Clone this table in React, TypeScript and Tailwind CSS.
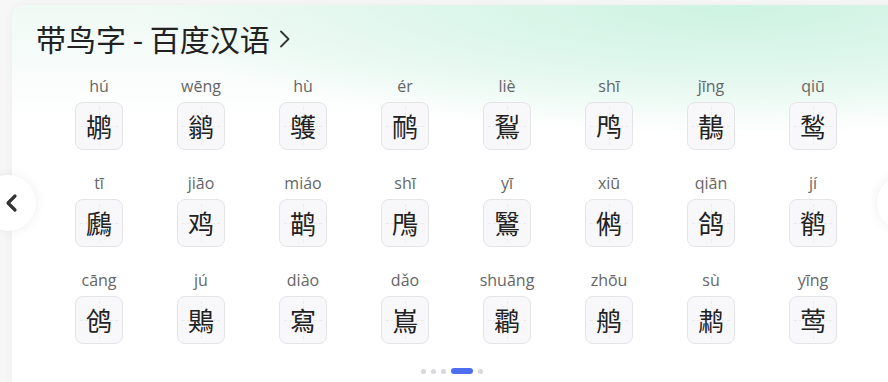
import React from "react";

type Glyph = { py: string; ch: string };

const rows: Glyph[][] = [
  [
    { py: "hú", ch: "鹕" },
    { py: "wēng", ch: "鹟" },
    { py: "hù", ch: "鹱" },
    { py: "ér", ch: "鸸" },
    { py: "liè", ch: "鴷" },
    { py: "shī", ch: "鸤" },
    { py: "jīng", ch: "鶄" },
    { py: "qiū", ch: "鹙" },
  ],
  [
    { py: "tī", ch: "鷉" },
    { py: "jiāo", ch: "鸡" },
    { py: "miáo", ch: "鹋" },
    { py: "shī", ch: "鳲" },
    { py: "yī", ch: "鷖" },
    { py: "xiū", ch: "鸺" },
    { py: "qiān", ch: "鸽" },
    { py: "jí", ch: "鹡" },
  ],
  [
    { py: "cāng", ch: "鸧" },
    { py: "jú", ch: "鶪" },
    { py: "diào", ch: "寫" },
    { py: "dǎo", ch: "嶌" },
    { py: "shuāng", ch: "鹴" },
    { py: "zhōu", ch: "鸼" },
    { py: "sù", ch: "鹔" },
    { py: "yīng", ch: "莺" },
  ],
];

function CharCell({ g }: { g: Glyph }) {
  return (
    <div className="flex flex-col items-center">
      <div className="h-5 text-[16px] leading-5 text-[#666] font-['Open_Sans',sans-serif]">{g.py}</div>
      <div className="relative mt-[6px] flex h-12 w-12 items-center justify-center rounded-lg border border-[#e4e4e6] bg-[#f8f8fa]">
        <div className="absolute left-1/2 top-1 bottom-1 border-l border-dashed border-[#ebebee]" />
        <div className="absolute top-1/2 left-1 right-1 border-t border-dashed border-[#ebebee]" />
        <span className="relative text-[26px] leading-none text-[#222] font-['Noto_Sans_CJK_SC',sans-serif]">{g.ch}</span>
      </div>
    </div>
  );
}

export default function App() {
  return (
    <div className="relative h-[382px] w-[888px] overflow-hidden bg-[#f7f7f7] pl-3 pt-[5px]">
      <div className="h-[400px] w-[900px] rounded-tl-xl bg-[radial-gradient(600px_130px_at_720px_0px,#cdf3e2_0%,rgba(214,245,231,0.7)_50%,rgba(255,255,255,0)_100%),linear-gradient(180deg,#f0faf5_0%,#f7fcfa_60px,#ffffff_115px)] shadow-[0_0_10px_rgba(0,0,0,0.05)]">
        <div className="flex items-center pl-6 pt-[15px] font-['Noto_Sans_CJK_SC',sans-serif] text-[30px] leading-9 text-[#222]">
          <span>带鸟字 - 百度汉语</span>
          <svg className="ml-[8px] mt-[1px]" width="12" height="20" viewBox="0 0 12 20" fill="none">
            <path d="M3 2.5l7.5 7.5-7.5 7.5" stroke="#333" strokeWidth="1.8" strokeLinecap="round" strokeLinejoin="round" />
          </svg>
        </div>

        <div className="ml-[36px] mt-5 grid w-[816px] grid-cols-8 gap-y-[23px]">
          {rows.flat().map((g, i) => (
            <CharCell key={i} g={g} />
          ))}
        </div>

        <div className="ml-[409px] mt-[24px] flex items-center gap-[5px]">
          <span className="h-[5px] w-[5px] rounded-full bg-[#d8d8dc]" />
          <span className="h-[5px] w-[5px] rounded-full bg-[#d8d8dc]" />
          <span className="h-[5px] w-[5px] rounded-full bg-[#d8d8dc]" />
          <span className="h-[6px] w-[22px] rounded-full bg-[#4e6ef2]" />
          <span className="h-[5px] w-[5px] rounded-full bg-[#d8d8dc]" />
        </div>
      </div>

      <div className="absolute left-[-20px] top-[175px] flex h-14 w-14 items-center justify-end rounded-full bg-white pr-[18px] shadow-[0_0_12px_rgba(0,0,0,0.07)]">
        <svg width="14" height="20" viewBox="0 0 14 20" fill="none">
          <path d="M11 3l-7 7 7 7" stroke="#333" strokeWidth="3.2" strokeLinecap="round" strokeLinejoin="round" />
        </svg>
      </div>
      <div className="absolute left-[877px] top-[175px] h-14 w-14 rounded-full bg-white shadow-[0_0_12px_rgba(0,0,0,0.07)]" />
    </div>
  );
}
